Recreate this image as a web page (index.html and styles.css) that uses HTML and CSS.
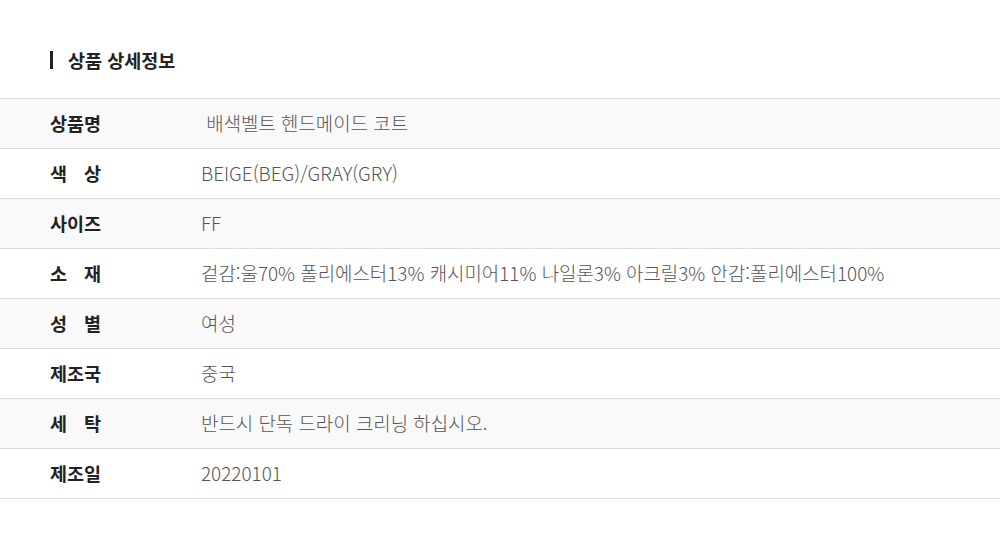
FILE: index.html
```html
<!DOCTYPE html>
<html lang="ko">
<head>
<meta charset="utf-8">
<link rel="stylesheet" href="styles.css">
</head>
<body>
<div class="page">
  <h2 class="title">상품 상세정보</h2>
  <div class="table">
    <div class="row odd"><div class="label"><span class="lb">상품명</span></div><div class="value">&nbsp;배색벨트 헨드메이드 코트</div></div>
    <div class="row"><div class="label"><span class="lb sp"><span>색</span><span>상</span></span></div><div class="value">BEIGE(BEG)/GRAY(GRY)</div></div>
    <div class="row odd"><div class="label"><span class="lb">사이즈</span></div><div class="value">FF</div></div>
    <div class="row"><div class="label"><span class="lb sp"><span>소</span><span>재</span></span></div><div class="value">겉감:울70% 폴리에스터13% 캐시미어11% 나일론3% 아크릴3% 안감:폴리에스터100%</div></div>
    <div class="row odd"><div class="label"><span class="lb sp"><span>성</span><span>별</span></span></div><div class="value">여성</div></div>
    <div class="row"><div class="label"><span class="lb">제조국</span></div><div class="value">중국</div></div>
    <div class="row odd"><div class="label"><span class="lb sp"><span>세</span><span>탁</span></span></div><div class="value">반드시 단독 드라이 크리닝 하십시오.</div></div>
    <div class="row"><div class="label"><span class="lb">제조일</span></div><div class="value">20220101</div></div>
  </div>
</div>
</body>
</html>
```
FILE: styles.css
```css
* { box-sizing: border-box; }
html, body { margin: 0; padding: 0; background: #fff; }
body { font-family: "Noto Sans CJK KR", "Noto Sans", sans-serif; }
.page { padding-top: 51px; }
.title {
  margin: 0 0 29px 50px;
  padding-left: 15px;
  border-left: 3px solid #222;
  font-size: 18.5px;
  font-weight: 700;
  color: #222;
  line-height: 18px;
  height: 18px;
  display: flex;
  align-items: center;
}
.table { border-top: 1px solid #ddd; }
.row {
  display: flex;
  align-items: center;
  height: 50px;
  padding-bottom: 2px;
  border-bottom: 1px solid #ddd;
}
.row.odd { background: #f9f9f9; }
.label {
  flex: 0 0 201px;
  padding-left: 50px;
  font-size: 18.5px;
  font-weight: 700;
  color: #222;
  white-space: nowrap;
}
.lb { display: inline-block; }
.lb.sp { display: flex; justify-content: space-between; width: 51px; }
.value {
  font-size: 18.9px;
  color: #555;
  font-weight: 300;
  white-space: nowrap;
}
```
